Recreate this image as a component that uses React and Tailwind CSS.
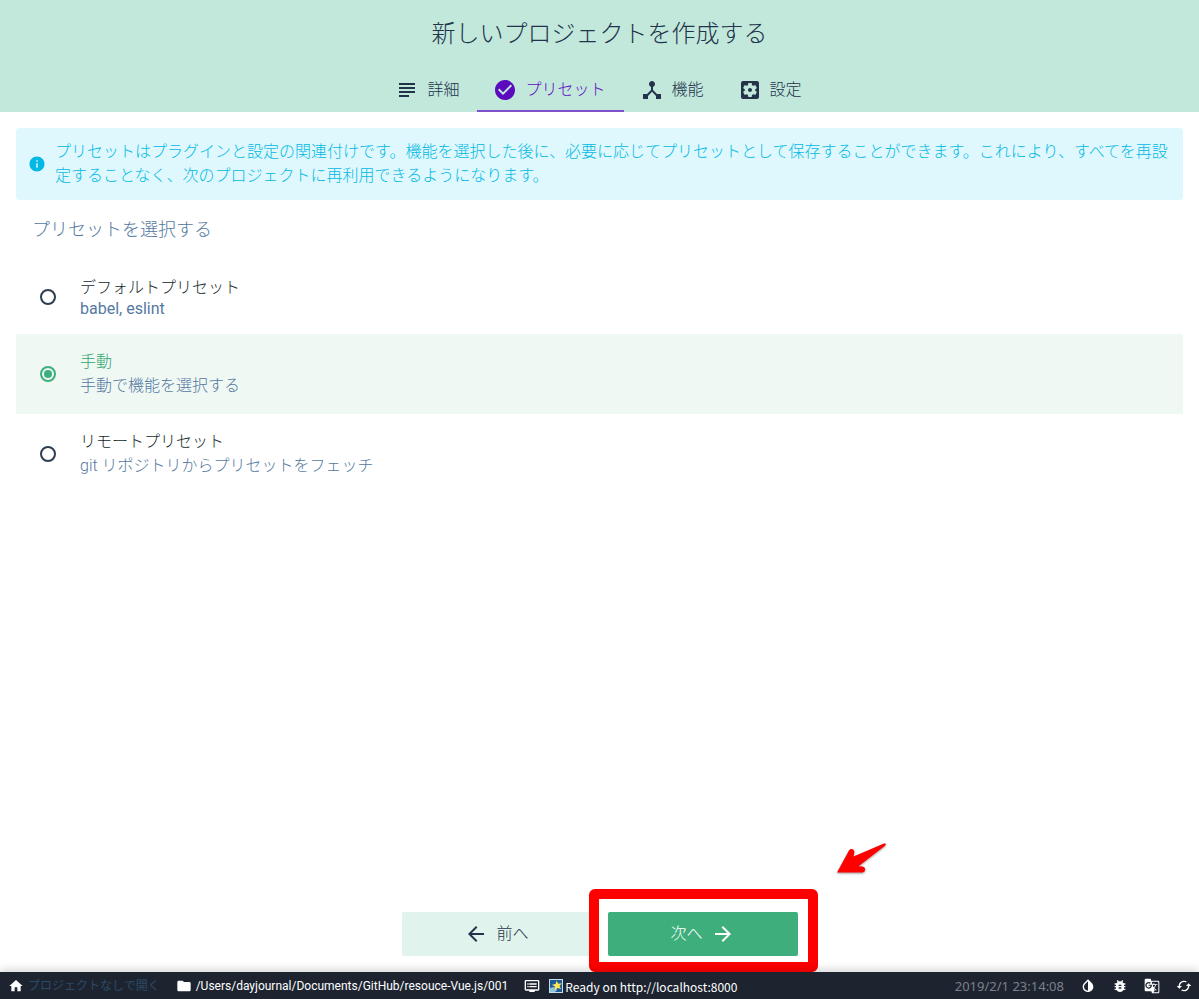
import React, { useState } from 'react'
import {
  MdSubject,
  MdCheckCircle,
  MdDeviceHub,
  MdSettingsApplications,
  MdInfo,
  MdArrowBack,
  MdArrowForward,
  MdHome,
  MdFolder,
  MdDvr,
  MdInvertColors,
  MdBugReport,
  MdGTranslate,
  MdLoop,
} from 'react-icons/md'

const tabs = [
  { id: 'details', label: '詳細', icon: MdSubject },
  { id: 'presets', label: 'プリセット', icon: MdCheckCircle },
  { id: 'features', label: '機能', icon: MdDeviceHub },
  { id: 'config', label: '設定', icon: MdSettingsApplications },
]

const presets = [
  { id: 'default', name: 'デフォルトプリセット', description: 'babel, eslint', descriptionStyle: 'leading-[18px] font-normal' },
  { id: 'manual', name: '手動', description: '手動で機能を選択する', descriptionStyle: 'leading-6' },
  { id: 'remote', name: 'リモートプリセット', description: 'git リポジトリからプリセットをフェッチ', descriptionStyle: 'leading-6' },
]

const Header = ({ active, onSelect }) => (
  <header className="flex flex-col items-center h-28 bg-[#c2e8dc]">
    <h1 className="pt-4 text-2xl leading-9">新しいプロジェクトを作成する</h1>
    <nav className="flex mt-auto h-11">
      {tabs.map(({ id, label, icon: Icon }) => (
        <button
          key={id}
          type="button"
          onClick={() => onSelect(id)}
          className={`flex items-center gap-2 pt-px pl-4 pr-[18px] border-b-2 ${
            id === active ? 'text-[#5c0abe] border-[#7f50cc]' : 'border-transparent'
          }`}
        >
          <Icon className="size-6" />
          <span>{label}</span>
        </button>
      ))}
    </nav>
  </header>
)

const PresetItem = ({ preset, checked, onChange }) => (
  <label className={`flex items-center gap-6 pl-6 pr-4 py-4 cursor-pointer ${checked ? 'bg-[#f0f8f4]' : ''}`}>
    <input
      type="radio"
      name="preset"
      checked={checked}
      onChange={onChange}
      className="appearance-none size-4 shrink-0 rounded-full border-2 border-[#2c3e50] checked:border-[#3eaf7c] checked:bg-[#3eaf7c] bg-clip-content p-[2px]"
    />
    <span className="flex flex-col">
      <span className={`leading-6 ${checked ? 'text-[#2fa56f]' : 'text-[#141f2b]'}`}>{preset.name}</span>
      <span className={`text-[#5479a0] ${preset.descriptionStyle}`}>{preset.description}</span>
    </span>
  </label>
)

// Red frame and arrow that point out the next button
const Highlight = () => (
  <>
    <span className="absolute -left-[19px] -right-5 -top-[23px] -bottom-4 border-10 border-[#ff0000] rounded-md pointer-events-none" />
    <svg
      className="absolute left-[228px] -top-[70px] drop-shadow-[0_1px_1px_rgba(0,0,0,0.4)] pointer-events-none"
      width="52"
      height="34"
      viewBox="0 0 52 34"
    >
      <path
        d="M1 30.500L13 8.500C14.500 5.500 19 7 18.300 10.500L17.500 14.500L48 1.600C50 1 50.500 2.500 49 3.800L22.500 24.200L26.500 24.500C30 25 30 30.200 26.500 30.500Z"
        fill="#ff0000"
      />
    </svg>
  </>
)

const StatusBar = () => (
  <footer className="relative flex items-center h-[27px] pl-2 pr-[7px] bg-[#1d2430] text-white text-xs font-normal shadow-[0_-2px_10px_rgba(0,0,0,0.18)]">
    <a href="#home" className="flex items-center gap-1 text-[#2c4a68]">
      <MdHome className="size-4 text-white" />
      プロジェクトなしで開く
    </a>
    <a href="#folder" className="flex items-center gap-1 ml-4">
      <MdFolder className="size-4" />
      /Users/dayjournal/Documents/GitHub/resouce-Vue.js/001
    </a>
    <button type="button" className="flex items-center ml-4">
      <MdDvr className="size-4" />
      <svg className="ml-[9px]" width="14" height="14" viewBox="0 0 14 14">
        <rect width="14" height="14" fill="#c9dcec" />
        <rect x="1" y="1" width="12" height="12" fill="#1d5c96" />
        <path d="M1 13V9l4-1 3 3-2 2z" fill="#8fc4de" />
        <path d="M7.800 1.800l1.400 2.900 3.600-.5-2.300 2.700 1.500 3.200-3.300-1-2.800 2.300.2-3.600L3 5.800l3.500-.8z" fill="#ffe65a" />
      </svg>
      <span className="ml-[2px] pt-[2px] font-['Noto_Sans_CJK_JP',sans-serif]">Ready on http://localhost:8000</span>
    </button>
    <span className="ml-auto pt-[2px] text-[13px] text-[#7b818a] font-['Noto_Sans',sans-serif]">2019/2/1 23:14:08</span>
    <div className="flex gap-4 ml-4">
      <button type="button" aria-label="Toggle dark mode"><MdInvertColors className="size-4" /></button>
      <button type="button" aria-label="Report a bug"><MdBugReport className="size-4" /></button>
      <button type="button" aria-label="Translate"><MdGTranslate className="size-4" /></button>
      <button type="button" aria-label="Reload"><MdLoop className="size-4 rotate-90" /></button>
    </div>
  </footer>
)

const App = () => {
  const [tab, setTab] = useState('presets')
  const [preset, setPreset] = useState('manual')

  return (
    <div className="flex flex-col min-h-screen bg-white text-base font-light text-[#22334a] font-[Roboto,'Noto_Sans_CJK_JP',sans-serif]">
      <Header active={tab} onSelect={setTab} />

      <main className="flex flex-col flex-1 p-4">
        <div className="flex items-center gap-[9px] pl-3 pr-2 py-3 rounded bg-[#dff8fe] text-[#03b9e3]">
          <MdInfo className="size-[18px] shrink-0" />
          <p>
            プリセットはプラグインと設定の関連付けです。機能を選択した後に、必要に応じてプリセットとして保存することができます。これにより、すべてを再設定することなく、次のプロジェクトに再利用できるようになります。
          </p>
        </div>

        <h2 className="px-4 py-4 text-lg leading-7 text-[#5479a0]">プリセットを選択する</h2>
        <div className="flex flex-col">
          {presets.map((p) => (
            <PresetItem key={p.id} preset={p} checked={p.id === preset} onChange={() => setPreset(p.id)} />
          ))}
        </div>

        {/* Actions */}
        <div className="flex justify-center gap-4 mt-auto">
          <button type="button" className="flex items-center justify-center gap-2 w-[190px] h-11 rounded-xs bg-[#e0f3ec]">
            <MdArrowBack className="size-6" />
            前へ
          </button>
          <div className="relative">
            <button type="button" className="flex items-center justify-center gap-2 w-[190px] h-11 rounded-xs bg-[#3eaf7c] text-white">
              次へ
              <MdArrowForward className="size-6" />
            </button>
            <Highlight />
          </div>
        </div>
      </main>

      <StatusBar />
    </div>
  )
}

export default App
